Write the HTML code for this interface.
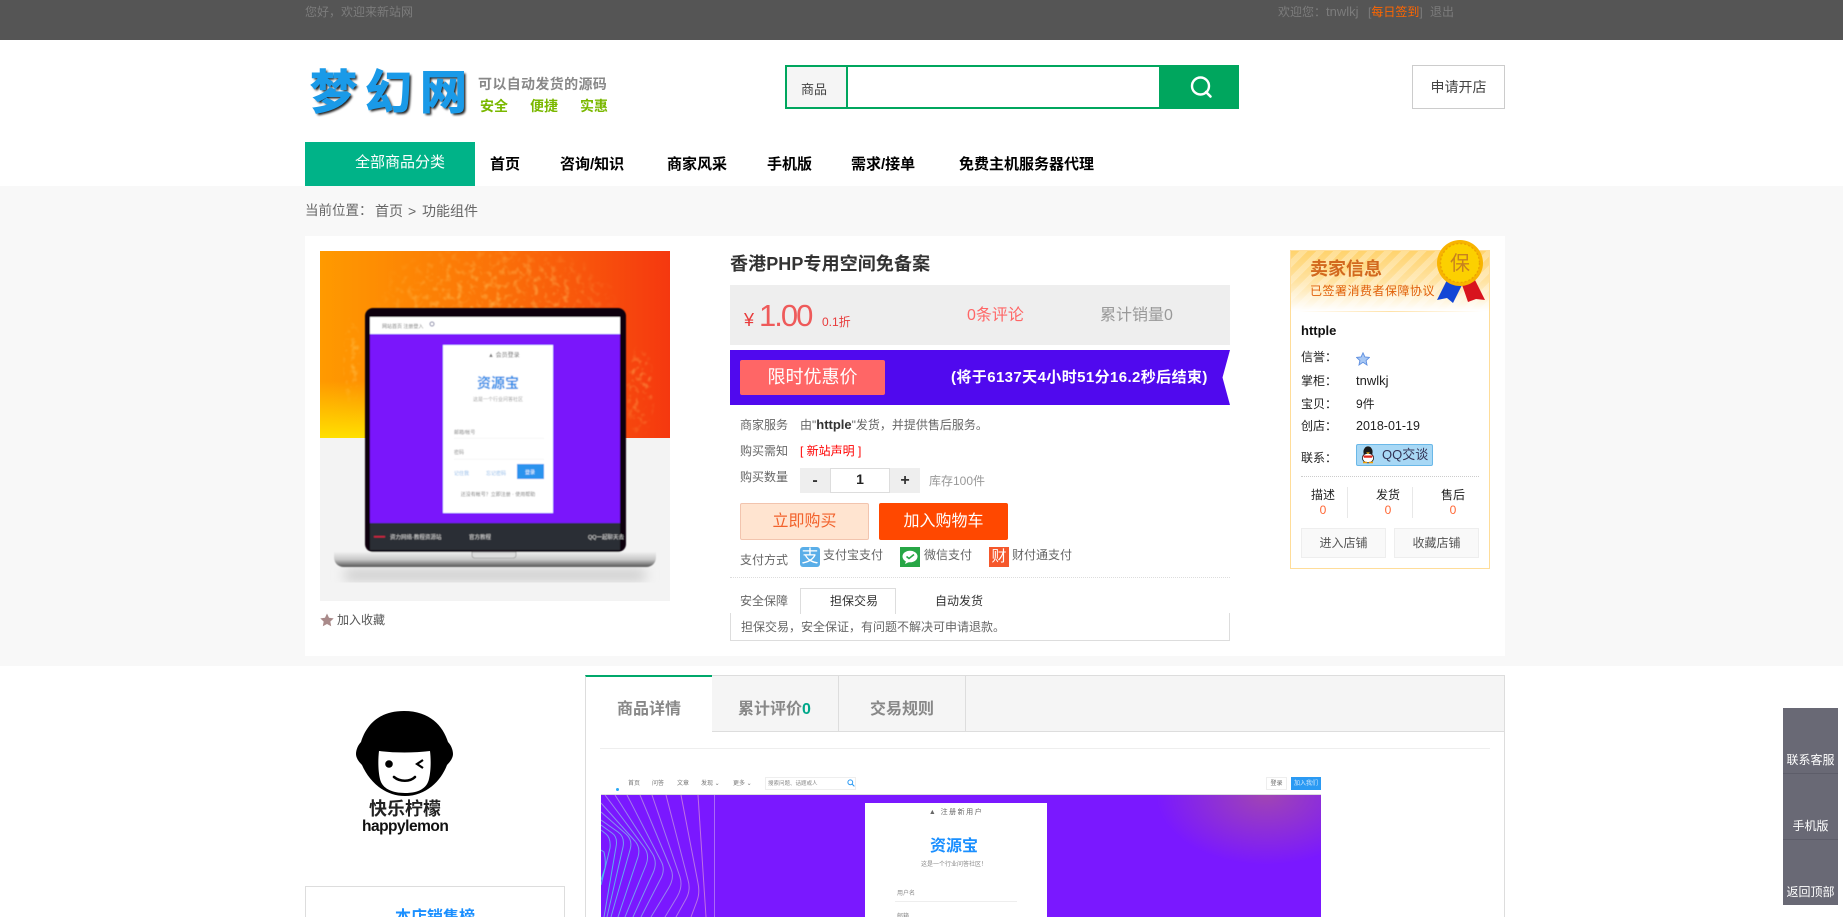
<!DOCTYPE html>
<html lang="zh">
<head>
<meta charset="utf-8">
<title>香港PHP专用空间免备案</title>
<style>
html,body{margin:0;padding:0;background:#fff;overflow:hidden;width:1843px;height:917px;}
body{font-family:"Liberation Sans","Noto Sans CJK SC",sans-serif;font-size:12px;color:#333;}
#w{position:relative;width:1843px;height:917px;overflow:hidden;}
.b{position:absolute;box-sizing:border-box;}
.t{position:absolute;white-space:nowrap;line-height:20px;height:20px;}
.c{text-align:center;}
svg{position:absolute;overflow:hidden;}
</style>
</head>
<body>
<div id="w">
<!-- top bar -->
<div class="b" style="left:0;top:0;width:1843px;height:40px;background:#555;"></div>
<div class="t" style="left:305px;top:2px;color:#7c7c7c;">您好，欢迎来新站网</div>
<div class="t" style="left:1278px;top:2px;color:#7c7c7c;">欢迎您：<span style="font-size:13px;">tnwlkj</span></div>
<div class="t" style="left:1368px;top:2px;color:#7c7c7c;">[<span style="color:#f60;">每日签到</span>]</div>
<div class="t" style="left:1430px;top:2px;color:#7c7c7c;">退出</div>

<!-- logo -->
<div class="b" style="left:310px;top:63px;height:60px;line-height:60px;font-size:47px;font-weight:700;color:#1a9ae8;letter-spacing:8px;white-space:nowrap;-webkit-text-stroke:1px #1a9ae8;text-shadow:2px 2px 2px #222;">梦幻网</div>
<div class="t" style="left:478px;top:74px;font-size:14px;font-weight:700;color:#888;letter-spacing:.35px;">可以自动发货的源码</div>
<div class="t" style="left:480px;top:96px;font-size:14px;font-weight:700;color:#7ab800;">安全</div>
<div class="t" style="left:530px;top:96px;font-size:14px;font-weight:700;color:#7ab800;">便捷</div>
<div class="t" style="left:580px;top:96px;font-size:14px;font-weight:700;color:#7ab800;">实惠</div>

<!-- search -->
<div class="b" style="left:785px;top:65px;width:454px;height:44px;border:2px solid #00a65e;background:#fff;"></div>
<div class="b" style="left:787px;top:67px;width:61px;height:40px;background:#f5f5f5;border-right:2px solid #00a65e;"></div>
<div class="t" style="left:801px;top:80px;font-size:13px;color:#444;">商品</div>
<div class="b" style="left:1159px;top:65px;width:80px;height:44px;background:#00a65e;"></div>
<svg style="left:1187px;top:73px;" width="28" height="28" viewBox="0 0 28 28"><circle cx="13.5" cy="13" r="8.5" fill="none" stroke="#fff" stroke-width="2.4"/><path d="M19 19l4.5 4.5" stroke="#fff" stroke-width="2.6" stroke-linecap="round"/></svg>
<div class="b" style="left:1412px;top:65px;width:93px;height:44px;border:1px solid #ccc;"></div>
<div class="t c" style="left:1412px;top:77px;width:93px;font-size:14px;color:#444;">申请开店</div>

<!-- nav -->
<div class="b" style="left:305px;top:142px;width:170px;height:44px;background:#00b388;"></div>
<div class="t" style="left:355px;top:153px;font-size:15px;color:#fff;">全部商品分类</div>
<div class="t" style="left:490px;top:155px;font-size:15px;font-weight:700;color:#000;">首页</div>
<div class="t" style="left:560px;top:155px;font-size:15px;font-weight:700;color:#000;">咨询/知识</div>
<div class="t" style="left:667px;top:155px;font-size:15px;font-weight:700;color:#000;">商家风采</div>
<div class="t" style="left:767px;top:155px;font-size:15px;font-weight:700;color:#000;">手机版</div>
<div class="t" style="left:851px;top:155px;font-size:15px;font-weight:700;color:#000;">需求/接单</div>
<div class="t" style="left:959px;top:155px;font-size:15px;font-weight:700;color:#000;">免费主机服务器代理</div>

<!-- gray band -->
<div class="b" style="left:0;top:186px;width:1843px;height:480px;background:#f8f8f8;"></div>
<div class="t" style="left:305px;top:201px;font-size:13.5px;color:#666;">当前位置：</div>
<div class="t" style="left:375px;top:201px;font-size:14px;color:#666;">首页</div>
<div class="t" style="left:408px;top:201px;font-size:14px;color:#666;">&gt;</div>
<div class="t" style="left:422px;top:201px;font-size:14px;color:#666;">功能组件</div>
<div class="b" style="left:305px;top:236px;width:1200px;height:420px;background:#fff;"></div>

<!-- product image -->
<svg style="left:320px;top:251px;" width="350" height="350" viewBox="0 0 350 350">
<defs>
<linearGradient id="g1" x1="0" y1="0" x2="1" y2="0"><stop offset="0" stop-color="#ff9a00"/><stop offset=".5" stop-color="#fb7208"/><stop offset="1" stop-color="#f5380f"/></linearGradient>
<linearGradient id="g2" x1="0" y1="0" x2="0" y2="1"><stop offset="0" stop-color="#ffe000" stop-opacity="0"/><stop offset="1" stop-color="#ffe000"/></linearGradient>
<linearGradient id="g3" x1="0" y1="0" x2="0" y2="1"><stop offset="0" stop-color="#f0f0f0"/><stop offset=".5" stop-color="#c8c8c8"/><stop offset="1" stop-color="#555"/></linearGradient>
<filter id="bl"><feGaussianBlur stdDeviation=".45"/></filter>
<filter id="bl2"><feGaussianBlur stdDeviation="6"/></filter>
<filter id="sp" x="0" y="0" width="100%" height="100%"><feTurbulence type="fractalNoise" baseFrequency=".16" numOctaves="2" seed="4"/><feColorMatrix values="0 0 0 0 1  0 0 0 0 .66  0 0 0 0 .15  0 0 0 3.5 -1.75"/><feGaussianBlur stdDeviation=".8"/></filter>
<radialGradient id="gm" cx=".5" cy=".5" r=".5"><stop offset="0" stop-color="#fff"/><stop offset=".6" stop-color="#fff" stop-opacity=".8"/><stop offset="1" stop-color="#fff" stop-opacity="0"/></radialGradient>
<mask id="m1"><rect width="350" height="187" fill="#000"/><ellipse cx="175" cy="50" rx="125" ry="60" fill="url(#gm)"/><ellipse cx="320" cy="140" rx="16" ry="48" fill="url(#gm)"/><ellipse cx="32" cy="110" rx="10" ry="48" fill="url(#gm)"/></mask>
</defs>
<rect width="350" height="187" fill="url(#g1)"/>
<rect x="0" y="130" width="45" height="57" fill="url(#g2)"/>
<g mask="url(#m1)" opacity=".45"><rect width="350" height="187" filter="url(#sp)"/></g>
<rect y="187" width="350" height="163" fill="#f3f3f3"/>
<rect x="25" y="318" width="300" height="12" fill="#ccc" filter="url(#bl2)"/>
<g filter="url(#bl)">
<rect x="45" y="57" width="261" height="244" rx="8" fill="#0c0610"/>
<rect x="50" y="66" width="250" height="17" fill="#fff"/>
<rect x="50" y="83" width="250" height="189" fill="#7a16fb"/>
<rect x="50" y="272" width="250" height="27" fill="#2b2e35"/>
<rect x="123" y="94" width="110" height="168" fill="#fff"/>
<text x="62" y="77" font-size="5" fill="#777">网站首页 注册登入</text>
<circle cx="112" cy="73" r="2" fill="none" stroke="#558" stroke-width=".8"/>
<text x="168" y="106" font-size="6" fill="#666">▲ 会员登录</text>
<text x="178" y="137" font-size="14" font-weight="700" fill="#2f8fe8" text-anchor="middle">资源宝</text>
<text x="178" y="150" font-size="5" fill="#999" text-anchor="middle">这是一个行业问答社区</text>
<text x="134" y="183" font-size="5" fill="#888">邮箱/帐号</text>
<rect x="134" y="187" width="90" height=".6" fill="#eee"/>
<text x="134" y="203" font-size="5" fill="#888">密码</text>
<rect x="134" y="208" width="90" height=".6" fill="#eee"/>
<text x="134" y="224" font-size="5" fill="#8ab8e8">记住我</text>
<text x="166" y="224" font-size="5" fill="#8ab8e8">忘记密码</text>
<rect x="197" y="213" width="27" height="15" fill="#2b93ee"/>
<text x="210" y="223" font-size="5" fill="#fff" text-anchor="middle">登录</text>
<text x="178" y="245" font-size="5" fill="#777" text-anchor="middle">还没有帐号？立即注册 · 使用帮助</text>
<rect x="54" y="285" width="11" height="1.5" fill="#d02040"/>
<text x="70" y="288" font-size="5.5" fill="#ddd">资力网络·教程资源站</text>
<text x="149" y="288" font-size="5.5" fill="#ddd">官方教程</text>
<text x="268" y="288" font-size="5.5" fill="#ddd">QQ一起聊天去</text>
<path d="M14 301h322v5c0 6-4 10-10 10H24c-6 0-10-4-10-10z" fill="url(#g3)"/>
<path d="M152 301h44v3c0 2-1 3-3 3h-38c-2 0-3-1-3-3z" fill="#ddd" stroke="#888" stroke-width=".6"/>
</g>
</svg>
<svg style="left:320px;top:613px;" width="14" height="14" viewBox="0 0 14 14"><path d="M7 .5l2 4.3 4.7.6-3.4 3.2.9 4.7L7 11l-4.2 2.3.9-4.7L.3 5.4 5 4.8z" fill="#a98a8a"/></svg>
<div class="t" style="left:337px;top:610px;color:#555;">加入收藏</div>

<!-- product info -->
<div class="t" style="left:730px;top:254px;font-size:18px;font-weight:700;color:#333;letter-spacing:.1px;">香港PHP专用空间免备案</div>
<div class="b" style="left:730px;top:285px;width:500px;height:60px;background:#eee;"></div>
<div class="t" style="left:744px;top:310px;font-size:18px;color:#e83b3b;">¥</div>
<div class="t" style="left:759px;top:304px;font-size:31px;color:#ee5a5a;letter-spacing:-2px;line-height:24px;height:24px;">1.00</div>
<div class="t" style="left:822px;top:312px;font-size:12px;color:#e83b3b;">0.1折</div>
<div class="t" style="left:967px;top:306px;font-size:16px;color:#f66;">0条评论</div>
<div class="t" style="left:1100px;top:306px;font-size:16px;color:#999;">累计销量0</div>

<div class="b" style="left:730px;top:350px;width:500px;height:55px;background:#5009ee;clip-path:polygon(0 0,100% 0,492.5px 50%,100% 100%,0 100%);"></div>
<div class="b" style="left:740px;top:360px;width:145px;height:35px;background:#f66;border-radius:2px;"></div>
<div class="t c" style="left:740px;top:367px;width:145px;font-size:18px;color:#fff;">限时优惠价</div>
<div class="t" style="left:951px;top:368px;font-size:15px;font-weight:700;color:#fff;letter-spacing:.4px;">(将于6137天4小时51分16.2秒后结束)</div>

<div class="t" style="left:740px;top:415px;color:#666;">商家服务</div>
<div class="t" style="left:800px;top:415px;color:#666;">由"<b style="color:#333;font-size:13px;">httple</b>"发货，并提供售后服务。</div>
<div class="t" style="left:740px;top:441px;color:#666;">购买需知</div>
<div class="t" style="left:800px;top:441px;color:#f00;">[ 新站声明 ]</div>
<div class="t" style="left:740px;top:467px;color:#666;">购买数量</div>
<div class="b" style="left:800px;top:468px;width:120px;height:25px;background:#eee;"></div>
<div class="b" style="left:830px;top:468px;width:60px;height:25px;background:#fff;border:1px solid #ddd;"></div>
<div class="t c" style="left:800px;top:471px;width:30px;font-size:16px;font-weight:700;color:#333;">-</div>
<div class="t c" style="left:830px;top:469px;width:60px;font-size:14px;font-weight:700;color:#222;">1</div>
<div class="t c" style="left:890px;top:471px;width:30px;font-size:16px;font-weight:700;color:#333;">+</div>
<div class="t" style="left:929px;top:471px;color:#999;">库存100件</div>

<div class="b" style="left:740px;top:503px;width:129px;height:37px;background:#ffe4d0;border:1px solid #f2c4ae;border-radius:2px;"></div>
<div class="t c" style="left:740px;top:512px;width:129px;font-size:16px;color:#f2622c;">立即购买</div>
<div class="b" style="left:879px;top:503px;width:129px;height:37px;background:#ff4800;border-radius:2px;"></div>
<div class="t c" style="left:879px;top:512px;width:129px;font-size:16px;color:#fff;">加入购物车</div>

<div class="t" style="left:740px;top:550px;color:#666;">支付方式</div>
<div class="b" style="left:800px;top:547px;width:20px;height:20px;background:#5aaee8;border-radius:3px;color:#fff;font-size:17px;line-height:20px;text-align:center;">支</div>
<div class="t" style="left:823px;top:545px;color:#666;">支付宝支付</div>
<svg style="left:900px;top:547px;" width="20" height="20" viewBox="0 0 20 20"><rect width="20" height="20" fill="#27a645"/><ellipse cx="10" cy="9.5" rx="7.5" ry="5.8" fill="#fff"/><path d="M6 14l-1 3 4-2z" fill="#fff"/><path d="M6.5 9.5l2.5 2 5-4" fill="none" stroke="#27a645" stroke-width="1.6"/></svg>
<div class="t" style="left:924px;top:545px;color:#666;">微信支付</div>
<div class="b" style="left:989px;top:547px;width:20px;height:20px;background:#f5582c;color:#fff;font-size:15px;line-height:20px;text-align:center;">财</div>
<div class="t" style="left:1012px;top:545px;color:#666;">财付通支付</div>

<div class="b" style="left:730px;top:577px;width:500px;height:0;border-top:1px dotted #ddd;"></div>
<div class="t" style="left:740px;top:591px;color:#666;">安全保障</div>
<div class="b" style="left:730px;top:613px;width:500px;height:28px;border:1px solid #ddd;border-top:0;"></div>
<div class="b" style="left:800px;top:588px;width:96px;height:26px;background:#fff;border:1px solid #ddd;border-bottom:0;"></div>
<div class="t" style="left:830px;top:591px;color:#333;">担保交易</div>
<div class="t" style="left:935px;top:591px;color:#333;">自动发货</div>
<div class="t" style="left:741px;top:617px;color:#666;">担保交易，安全保证，有问题不解决可申请退款。</div>

<!-- seller -->
<div class="b" style="left:1290px;top:250px;width:200px;height:319px;border:1px solid #ffdd99;background:#fff;"></div>
<div class="b" style="left:1291px;top:251px;width:198px;height:60px;background:linear-gradient(to bottom,rgba(255,255,255,0) 0,rgba(255,255,255,.35) 50%,#fff 100%),repeating-linear-gradient(135deg,#ffd36e 0,#ffd36e 6px,#ffdf95 6px,#ffdf95 12px);"></div>
<div class="b" style="left:1298px;top:311px;width:185px;height:1px;background:linear-gradient(to right,#fff,#ffe2a8 50%,#fff);"></div>
<div class="t" style="left:1310px;top:259px;font-size:18px;font-weight:700;color:#d2691e;">卖家信息</div>
<div class="t" style="left:1310px;top:281px;font-size:12px;color:#e0600a;letter-spacing:.5px;">已签署消费者保障协议</div>
<svg style="left:1433px;top:240px;" width="58" height="64" viewBox="0 0 58 64">
<path d="M16 36l-12 24 10-2 6 5 11-22z" fill="#1246d6"/>
<path d="M40 36l12 24-9-1-8 3-8-23z" fill="#d8141e"/>
<circle cx="27" cy="23" r="23" fill="#f8b400"/>
<circle cx="27" cy="23" r="19.5" fill="#fcd000" stroke="#eba400" stroke-width="1.4" stroke-dasharray="2 2"/>
<text x="27" y="30" font-size="20" fill="#c7811f" text-anchor="middle">保</text>
</svg>
<div class="t" style="left:1301px;top:321px;font-size:13px;font-weight:700;color:#111;">httple</div>
<div class="t" style="left:1301px;top:347px;color:#222;">信誉：</div>
<svg style="left:1356px;top:352px;" width="14" height="14" viewBox="0 0 14 14"><path d="M7 .8l1.9 4.1 4.5.5-3.3 3.1.9 4.5L7 10.3l-4 2.7.9-4.5L.6 5.4l4.5-.5z" fill="#a8c8f4" stroke="#5f8fe0" stroke-width=".9"/></svg>
<div class="t" style="left:1301px;top:371px;color:#222;">掌柜：</div>
<div class="t" style="left:1356px;top:371px;color:#222;font-size:13px;">tnwlkj</div>
<div class="t" style="left:1301px;top:394px;color:#222;">宝贝：</div>
<div class="t" style="left:1356px;top:394px;color:#222;">9件</div>
<div class="t" style="left:1301px;top:416px;color:#222;">创店：</div>
<div class="t" style="left:1356px;top:416px;color:#222;font-size:12.5px;">2018-01-19</div>
<div class="t" style="left:1301px;top:448px;color:#222;">联系：</div>
<div class="b" style="left:1356px;top:444px;width:77px;height:22px;background:#a8d8f5;border:1px solid #6ab8e8;border-radius:2px;"></div>
<svg style="left:1360px;top:446px;" width="16" height="18" viewBox="0 0 16 18"><ellipse cx="8" cy="6" rx="4.6" ry="5.6" fill="#1a1a1a"/><ellipse cx="8" cy="12" rx="5.6" ry="4.8" fill="#fff" stroke="#222" stroke-width=".8"/><path d="M3 9.5h10l-1 2.2H4z" fill="#e02a1c"/><path d="M6 6.4h4l-2 1.6z" fill="#f5b400"/><path d="M3 16.5h4M9 16.5h4" stroke="#f5a000" stroke-width="1.6"/></svg>
<div class="t" style="left:1382px;top:445px;font-size:13px;color:#335;">QQ交谈</div>
<div class="b" style="left:1301px;top:476px;width:178px;height:0;border-top:1px dotted #ccc;"></div>
<div class="t c" style="left:1293px;top:485px;width:60px;color:#222;">描述</div>
<div class="t c" style="left:1358px;top:485px;width:60px;color:#222;">发货</div>
<div class="t c" style="left:1423px;top:485px;width:60px;color:#222;">售后</div>
<div class="t c" style="left:1293px;top:500px;width:60px;color:#f63;">0</div>
<div class="t c" style="left:1358px;top:500px;width:60px;color:#f63;">0</div>
<div class="t c" style="left:1423px;top:500px;width:60px;color:#f63;">0</div>
<div class="b" style="left:1347px;top:487px;width:1px;height:31px;background:#e8e8e8;"></div>
<div class="b" style="left:1412px;top:487px;width:1px;height:31px;background:#e8e8e8;"></div>
<div class="b" style="left:1301px;top:528px;width:85px;height:30px;background:#f9f9f9;border:1px solid #eee;"></div>
<div class="b" style="left:1394px;top:528px;width:85px;height:30px;background:#f9f9f9;border:1px solid #eee;"></div>
<div class="t c" style="left:1301px;top:533px;width:85px;color:#555;">进入店铺</div>
<div class="t c" style="left:1394px;top:533px;width:85px;color:#555;">收藏店铺</div>

<!-- shop logo -->
<svg style="left:350px;top:705px;" width="110" height="95" viewBox="350 705 110 95">
<path d="M404 711c-26 0-38 15-43 31-3 3-5 8-5 12s3 8 6 11c7 16 22 31 43 31s36-15 42-31c3-3 6-7 6-11s-2-9-5-12c-5-16-18-31-44-31z" fill="#000"/>
<path d="M379 751c16 2 35 2 51 0 1 8 1 20-1 28-2 9-10 14-24 14s-23-5-25-14c-2-8-2-20-1-28z" fill="#fff"/>
<circle cx="389" cy="764" r="3.8" fill="#000"/>
<path d="M423 760l-6 4 6 4" fill="none" stroke="#000" stroke-width="2.2"/>
<path d="M394 777c6 5 16 5 21 0" fill="none" stroke="#000" stroke-width="2.6" stroke-linecap="round"/>
</svg>
<div class="t" style="left:369px;top:799px;font-size:18px;font-weight:700;color:#222;">快乐柠檬</div>
<div class="t" style="left:362px;top:817px;font-size:15.5px;font-weight:700;color:#111;letter-spacing:-.5px;">happylemon</div>

<div class="b" style="left:305px;top:886px;width:260px;height:60px;border:1px solid #ddd;"></div>
<div class="t c" style="left:305px;top:908px;width:260px;font-size:16px;font-weight:700;color:#1a8fff;">本店销售榜</div>

<!-- detail panel -->
<div class="b" style="left:585px;top:675px;width:920px;height:260px;border:1px solid #ddd;"></div>
<div class="b" style="left:586px;top:676px;width:918px;height:56px;background:#f5f5f5;border-bottom:1px solid #ddd;"></div>
<div class="b" style="left:585px;top:675px;width:127px;height:58px;background:#fff;border-top:2px solid #00a86b;border-left:1px solid #ddd;"></div>
<div class="b" style="left:838px;top:676px;width:1px;height:56px;background:#ddd;"></div>
<div class="b" style="left:965px;top:676px;width:1px;height:56px;background:#ddd;"></div>
<div class="t" style="left:617px;top:700px;font-size:16px;font-weight:700;color:#888;">商品详情</div>
<div class="t" style="left:738px;top:700px;font-size:16px;font-weight:700;color:#888;">累计评价<span style="color:#00a88a;">0</span></div>
<div class="t" style="left:870px;top:700px;font-size:16px;font-weight:700;color:#888;">交易规则</div>
<div class="b" style="left:600px;top:748px;width:890px;height:1px;background:#eee;"></div>

<!-- detail image -->
<div class="b" style="left:601px;top:775px;width:720px;height:20px;background:#fff;border-bottom:1px solid #ddd;"></div>
<div class="b" style="left:616px;top:788px;width:3px;height:3px;border-radius:50%;background:#29a9f5;"></div>
<div class="t" style="left:628px;top:774px;font-size:6px;color:#777;">首页</div>
<div class="t" style="left:652px;top:774px;font-size:6px;color:#777;">问答</div>
<div class="t" style="left:677px;top:774px;font-size:6px;color:#777;">文章</div>
<div class="t" style="left:701px;top:774px;font-size:6px;color:#777;">发现 ⌄</div>
<div class="t" style="left:733px;top:774px;font-size:6px;color:#777;">更多 ⌄</div>
<div class="b" style="left:765px;top:777px;width:91px;height:13px;border:1px solid #eee;"></div>
<div class="t" style="left:768px;top:774px;font-size:5.5px;color:#888;">搜索问题、话题或人</div>
<svg style="left:847px;top:779px;" width="8" height="8" viewBox="0 0 8 8"><circle cx="3.3" cy="3.3" r="2.4" fill="none" stroke="#2b9af3" stroke-width="1"/><path d="M5 5l2.4 2.4" stroke="#2b9af3"/></svg>
<div class="b" style="left:1266px;top:777px;width:21px;height:13px;background:#fff;border:1px solid #eee;"></div>
<div class="t c" style="left:1266px;top:774px;width:21px;font-size:6px;color:#666;">登录</div>
<div class="b" style="left:1291px;top:777px;width:30px;height:13px;background:#2b9af3;"></div>
<div class="t c" style="left:1291px;top:774px;width:30px;font-size:6px;color:#d8ecff;">加入我们</div>
<div class="b" style="left:601px;top:795px;width:720px;height:122px;background:radial-gradient(ellipse 110px 70px at 665px 0,rgba(170,80,160,.8),rgba(122,24,255,0) 100%),#7a18ff;"></div>
<svg style="left:601px;top:795px;" width="120" height="122" viewBox="601 795 120 122">
<defs><radialGradient id="gl" gradientUnits="userSpaceOnUse" cx="601" cy="875" r="105"><stop offset="0" stop-color="#45c8ea"/><stop offset=".4" stop-color="#78a8ee"/><stop offset=".8" stop-color="#b080e8"/><stop offset="1" stop-color="#c878e0"/></radialGradient></defs>
<g fill="none" stroke="url(#gl)" stroke-width="1" stroke-opacity=".9">
<path d="M698 795L706 917"/>
<path d="M681 795L698 883Q700 893 697 901L691 917"/>
<path d="M666 795L688 880Q691 890 686 899L676 917"/>
<path d="M652 795L680 877Q683 887 677 897L665 917"/>
<path d="M640 795L671 869Q675 878 668 889L651 917"/>
<path d="M627 795L661 861Q666 870 660 880L641 917"/>
<path d="M615 795L652 853Q658 862 653 873L633 917"/>
<path d="M605 795L644 847Q650 855 646 865L625 917"/>
<path d="M601 803L634 840Q641 847 638 857L618 917"/>
<path d="M601 812L626 834Q633 840 630 850L611 917"/>
<path d="M601 820L618 832Q625 837 623 847L607 917"/>
<path d="M601 825L612 833Q618 837 616 847L604 917"/>
<path d="M601 830L606 834Q611 838 610 848L601 885"/>
<path d="M601 850L604 852Q606 860 605 868L601 880"/>
</g>
<path d="M714.5 795V917" stroke="#c9a0f0" stroke-opacity=".6" stroke-width="1"/>
</svg>
<div class="b" style="left:865px;top:803px;width:182px;height:114px;background:#fff;"></div>
<div class="t c" style="left:865px;top:803px;width:182px;font-size:7px;color:#666;letter-spacing:1.5px;">▲ 注册新用户</div>
<div class="t c" style="left:865px;top:837px;width:178px;font-size:16px;font-weight:700;color:#1a8fff;">资源宝</div>
<div class="t c" style="left:865px;top:855px;width:178px;font-size:6px;color:#888;">这是一个行业问答社区！</div>
<div class="t" style="left:897px;top:884px;font-size:6px;color:#888;">用户名</div>
<div class="b" style="left:895px;top:901px;width:122px;height:1px;background:#eee;"></div>
<div class="t" style="left:897px;top:907px;font-size:6px;color:#888;">邮箱</div>

<!-- float -->
<div class="b" style="left:1783px;top:708px;width:55px;height:197px;background:#696975;"></div>
<div class="b" style="left:1783px;top:773px;width:55px;height:1px;background:#5d5d69;"></div>
<div class="b" style="left:1783px;top:839px;width:55px;height:1px;background:#5d5d69;"></div>
<div class="t c" style="left:1783px;top:750px;width:55px;color:#fff;">联系客服</div>
<div class="t c" style="left:1783px;top:816px;width:55px;color:#fff;">手机版</div>
<div class="t c" style="left:1783px;top:882px;width:55px;color:#fff;">返回顶部</div>
</div>
</body>
</html>
